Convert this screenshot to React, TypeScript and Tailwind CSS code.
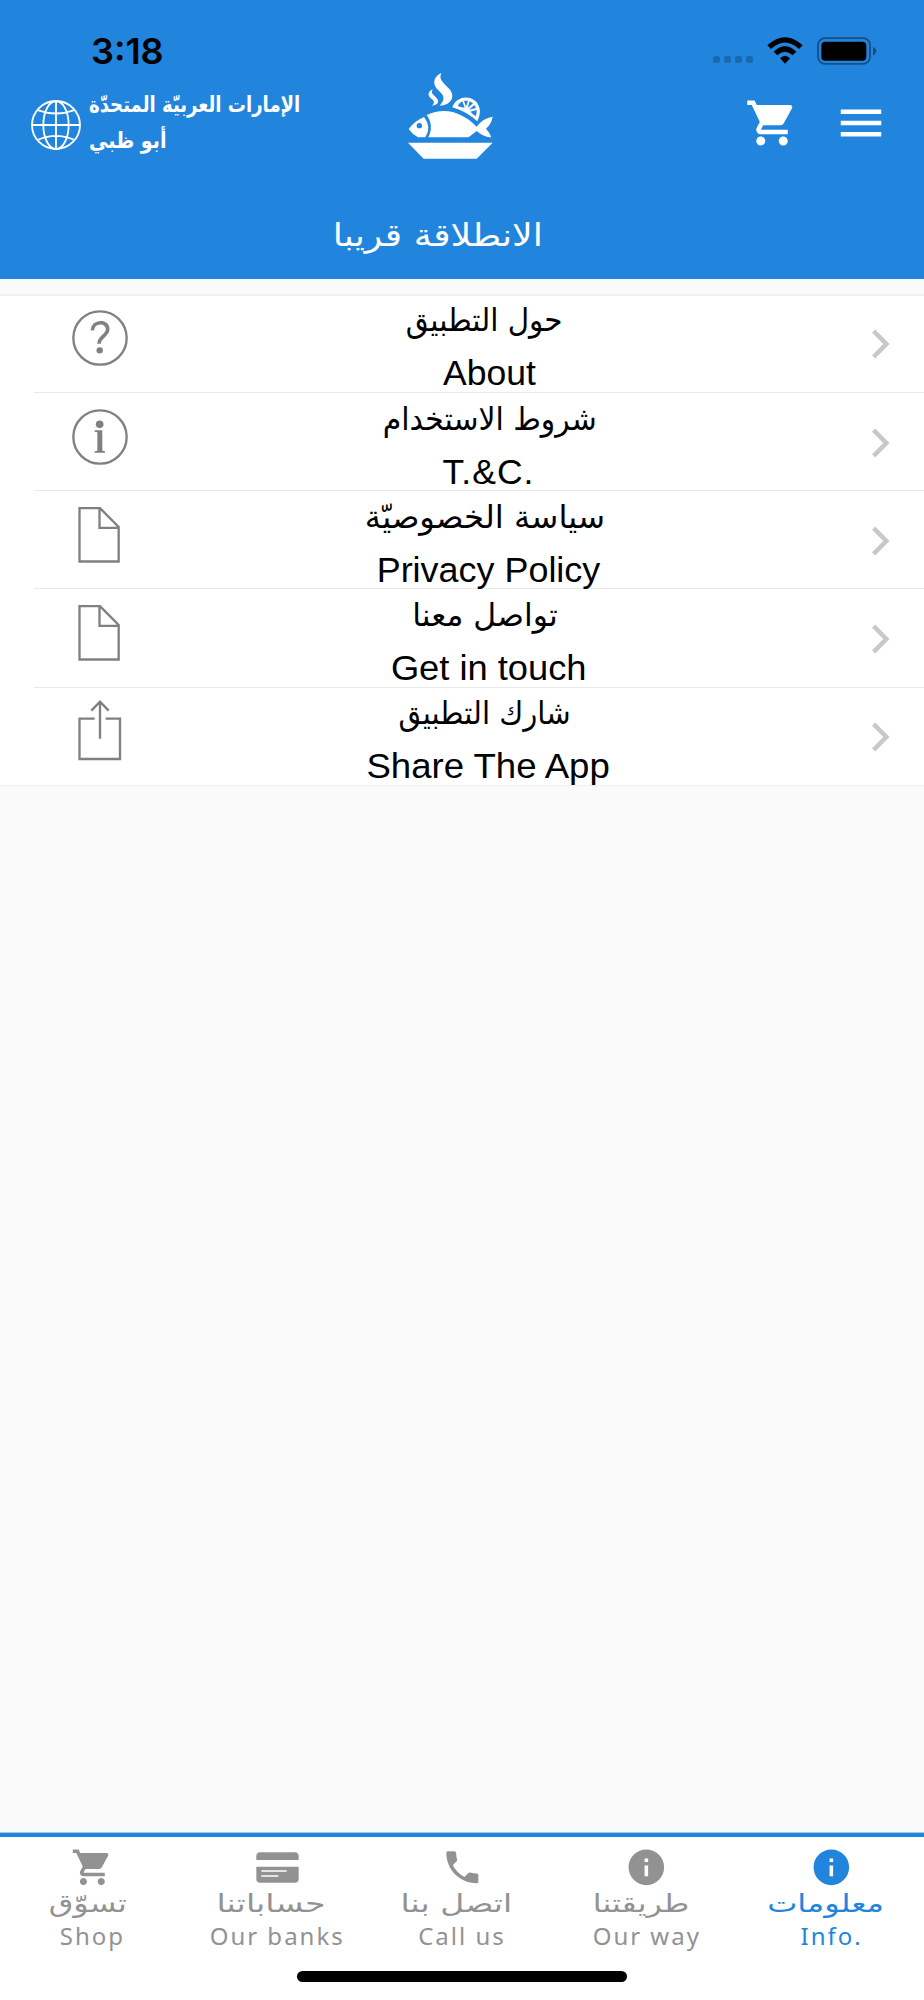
import React from "react";
import { MdShoppingCart, MdMenu, MdPhone, MdInfo } from "react-icons/md";

function GlobeIcon() {
  return (
    <svg width="50" height="50" viewBox="0 0 150 150" fill="none" stroke="white" strokeWidth="5.500">
      <circle cx="75" cy="75" r="72" />
      <ellipse cx="75" cy="75" rx="38" ry="72" />
      <path d="M75 3V147M3 75H147M22 31Q75 50 128 31M22 119Q75 96 128 119" />
    </svg>
  );
}

function FishLogo() {
  return (
    <svg width="85" height="86" viewBox="234 70 255 258" fill="white" className="-mt-px">
      <path d="M234 279H488L440 327H281Z" />
      <path d="M236 238Q252 215 282 202Q306 232 286 263H264Q246 253 236 238Z" />
      <circle cx="268" cy="228" r="8" fill="#2185de" />
      <path d="M290 196C345 170 398 188 440 231Q459 205 488 201Q485 222 468 237Q478 247 484 263Q462 263 440 244L416 263H295C307 240 305 216 290 196Z" />
      <path d="M334 70C309 81 306 105 325 122C343 138 347 149 329 168C365 167 377 139 358 118C340 98 325 91 334 70Z" />
      <path d="M308 119C292 127 293 139 304 147C314 154 314 159 306 168C324 166 329 155 319 144C309 134 302 132 308 119Z" />
      <path d="M367 173C378 142 414 135 436 154C453 170 453 193 442 215Q410 186 367 173Z" />
      <g fill="#2185de">
        <path d="M383 169Q389 158 397 155L404 174Q396 174 383 169Z" />
        <path d="M402 153H414L408 171Z" />
        <path d="M419 155L429 161L413 175Z" />
        <path d="M433 166L438 175L417 180Z" />
        <path d="M440 181Q441 191 437 200Q428 193 421 186Z" />
      </g>
    </svg>
  );
}

function WifiIcon() {
  return (
    <svg width="36" height="27" viewBox="0 0 108 81">
      <path d="M1 25Q54 -24 107 25L96 36Q54 -3 12 36Z" />
      <path d="M20 44Q54 12 88 44L77 55Q54 33 31 55Z" />
      <path d="M39 64Q54 49 69 64L54 80Z" />
    </svg>
  );
}

function BatteryIcon() {
  return (
    <svg width="60" height="28" viewBox="0 0 180 84">
      <rect x="3" y="3.500" width="156" height="77" rx="21" fill="none" stroke="black" strokeOpacity="0.4" strokeWidth="5.500" />
      <rect x="13" y="14" width="135" height="57" rx="12" />
      <path d="M168 29Q178 34 178 42Q178 50 168 55Z" fillOpacity="0.4" />
    </svg>
  );
}

function QuestionIcon() {
  return (
    <svg width="56" height="56" viewBox="0 0 168 168" fill="none" stroke="#808080">
      <circle cx="84" cy="84" r="80" strokeWidth="7" />
      <path d="M61 61C63 31 107 31 107 58C107 77 81 80 81 101" strokeWidth="11" />
      <circle cx="83" cy="121" r="9.500" fill="#808080" stroke="none" />
    </svg>
  );
}

function InfoOutlineIcon() {
  return (
    <svg width="56" height="56" viewBox="0 0 168 168" fill="#808080">
      <circle cx="84" cy="84" r="80" strokeWidth="7" fill="none" stroke="#808080" />
      <circle cx="83" cy="46" r="11.500" />
      <path d="M68 64H91V125L99 127V131H68V127L76 125V70L68 68Z" />
    </svg>
  );
}

function DocumentIcon() {
  return (
    <svg width="56" height="56" viewBox="0 0 168 168" fill="none" stroke="#808080" strokeWidth="7">
      <path d="M22.500 3.500H84L140 60V163.500H22.500ZM82.500 3.500V62.500H140" />
    </svg>
  );
}

function ShareIcon() {
  return (
    <svg width="56" height="62" viewBox="0 0 168 186" fill="none" stroke="#808080" strokeWidth="7">
      <path d="M68 59H22.500V180H144V59H101M84 119V8M58 35L84 8L110 35" />
    </svg>
  );
}

function BankCardIcon() {
  return (
    <svg width="43" height="31" viewBox="0 0 129 93" fill="#929292">
      <path d="M1 24V13Q1 1 13 1H116Q128 1 128 13V24Z" />
      <path d="M1 44H128V80Q128 92 116 92H13Q1 92 1 80Z" />
      <path d="M16 57H92M16 72H67" stroke="white" strokeWidth="5" />
    </svg>
  );
}

function Chevron() {
  return (
    <svg width="18" height="30" viewBox="0 0 54 90" fill="none" stroke="#c7c7cc" strokeWidth="13.500">
      <path d="M5 6.500L43 45L5 83.500" />
    </svg>
  );
}

const rows = [
  { ar: "حول التطبيق", en: "About", icon: <QuestionIcon />, arClass: "mr-[9px] scale-x-[0.92]", enClass: "ml-[2px]" },
  { ar: "شروط الاستخدام", en: "T.&C.", icon: <InfoOutlineIcon />, arClass: "ml-[2px] scale-x-[0.933]", enClass: "tracking-[1px]" },
  { ar: "سياسة الخصوصيّة", en: "Privacy Policy", icon: <DocumentIcon />, arClass: "mr-[8px] scale-x-[1.01]", enClass: "scale-x-[1.012]" },
  { ar: "تواصل معنا", en: "Get in touch", icon: <DocumentIcon />, arClass: "mr-[8px] scale-x-[0.983]", enClass: "scale-x-[1.022]" },
  { ar: "شارك التطبيق", en: "Share The App", icon: <ShareIcon />, arClass: "mr-[8px] scale-x-[0.91]", enClass: "scale-x-[1.03]" },
];

const tabs = [
  { ar: "تسوّق", en: "Shop", icon: <MdShoppingCart size={42.7} />, arClass: "mr-[9px] scale-x-[1.27]", active: false },
  { ar: "حساباتنا", en: "Our banks", icon: <BankCardIcon />, arClass: "mr-[12px] scale-x-[1.33]", active: false },
  { ar: "اتصل بنا", en: "Call us", icon: <MdPhone size={42.7} />, arClass: "mr-[11px] scale-x-[1.32]", active: false },
  { ar: "طريقتنا", en: "Our way", icon: <MdInfo size={42.7} />, arClass: "mr-[12px] scale-x-[1.27]", active: false },
  { ar: "معلومات", en: "Info.", icon: <MdInfo size={42.7} />, arClass: "mr-[12px] scale-x-[1.28]", active: true },
];

export default function App() {
  return (
    <div className="flex h-[2000px] w-[924px] flex-col overflow-hidden bg-[#fafafa] font-['DejaVu_Sans',sans-serif]">
      <header className="flex h-[279px] shrink-0 flex-col bg-[#2185de] text-white">
        <div className="flex h-[74px] items-start justify-between pr-[47px] pl-[91px] text-black">
          <span className="pt-[33px] font-['Inter',sans-serif] text-[36px] leading-[36px] font-semibold">3:18</span>
          <div className="flex pt-[37px]">
            <div className="mt-[19px] mr-[14px] flex gap-[4px]">
              {[0, 1, 2, 3].map((n) => (
                <i key={n} className="size-[7px] rounded-[2px] bg-black/20" />
              ))}
            </div>
            <WifiIcon />
            <span className="ml-[14px]"><BatteryIcon /></span>
          </div>
        </div>
        <div className="flex h-[100px]">
          <div className="flex w-[408px] pl-[31px]">
            <span className="mt-[26px]"><GlobeIcon /></span>
            <div className="ml-[8px] flex flex-col items-start text-[22px] leading-[36px] font-bold">
              <span dir="rtl" className="mt-[13px] origin-left scale-x-[0.822] whitespace-nowrap">الإمارات العربيّة المتحدّة</span>
              <span dir="rtl" className="origin-left scale-x-[0.87] whitespace-nowrap">أبو ظبي</span>
            </div>
          </div>
          <FishLogo />
          <MdShoppingCart size={54} className="mt-[22px] ml-[252px]" />
          <MdMenu size={54} className="mt-[22px] ml-[35px]" />
        </div>
        <div dir="rtl" className="mt-[41px] flex h-[40px] w-[876px] justify-center text-[31px] leading-[40px]">
          <span className="scale-x-[1.17]">الانطلاقة قريبا</span>
        </div>
      </header>

      <main className="mt-[15px] border-t-2 border-b border-[#efefef] bg-white text-black">
        {rows.map((row, i) => (
          <div key={row.en} className={`flex pl-[34px] ${i > 0 ? "h-[98.2px]" : "h-[96px]"}`}>
            <div className={`flex flex-1 ${i > 0 ? "border-t border-[#e9e9e9] pt-[1.6px]" : ""}`}>
              <div className={`w-[200px] pl-[37.500px] ${i === 4 ? "pt-[9.500px]" : "pt-[14.300px]"}`}>{row.icon}</div>
              <div className="flex w-[509px] flex-col items-center">
                <span dir="rtl" className={`h-[50px] text-[32px] leading-[48px] whitespace-nowrap ${row.arClass}`}>{row.ar}</span>
                <span className={`h-[45px] font-['Liberation_Sans',sans-serif] text-[35.5px] leading-[55px] whitespace-nowrap ${row.enClass}`}>{row.en}</span>
              </div>
              <span className="mt-[33px] ml-[129px]"><Chevron /></span>
            </div>
          </div>
        ))}
      </main>

      <nav className="mt-auto flex h-[167px] shrink-0 flex-col items-center border-t-4 border-[#2185de] bg-white shadow-[0_-1px_0_#9ccbf0]">
        <div className="grid h-[134px] w-full grid-cols-5">
          {tabs.map((tab) => (
            <div key={tab.en} className={`flex flex-col items-center ${tab.active ? "text-[#2185de]" : "text-[#929292]"}`}>
              <div className="mt-[9px] flex h-[43px] items-center justify-center">{tab.icon}</div>
              <span dir="rtl" className={`h-[32px] text-[25px] leading-[29px] whitespace-nowrap ${tab.arClass}`}>{tab.ar}</span>
              <span className="font-['Noto_Sans',sans-serif] text-[24px] leading-[30px] tracking-[2px] whitespace-nowrap">{tab.en}</span>
            </div>
          ))}
        </div>
        <div className="h-[11px] w-[330px] shrink-0 rounded-full bg-black" />
      </nav>
    </div>
  );
}
